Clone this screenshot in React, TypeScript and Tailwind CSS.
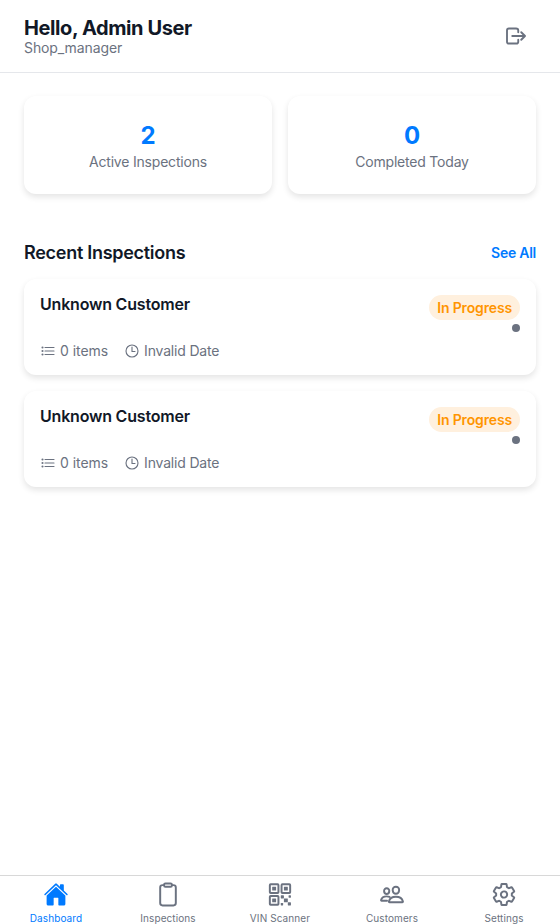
import {
  IoClipboardOutline,
  IoHome,
  IoListOutline,
  IoLogOutOutline,
  IoPeopleOutline,
  IoQrCodeOutline,
  IoSettingsOutline,
  IoTimeOutline,
} from "react-icons/io5";
import type { IconType } from "react-icons";

const shadow = "shadow-[0_3px_6px_rgba(0,0,0,0.11)]";
const boldIcon = "[&_[stroke-width]]:[stroke-width:40px]";
const smallIcon = "[&_[stroke-width]]:[stroke-width:36px]";

function StatCard({ value, label }: { value: number; label: string }) {
  return (
    <div className={`flex h-[98px] flex-1 flex-col items-center rounded-xl bg-white pt-[25px] ${shadow}`}>
      <span className="text-2xl leading-[29px] font-bold text-[#007aff]">{value}</span>
      <span className="mt-[3px] text-sm leading-[17px] tracking-[-0.2px] text-[#6b7280]">{label}</span>
    </div>
  );
}

function InspectionCard() {
  return (
    <article className={`flex h-24 justify-between rounded-xl bg-white p-4 ${shadow}`}>
      <div className="flex flex-col justify-between">
        <h3 className="text-base leading-[19px] font-semibold tracking-[-0.2px]">Unknown Customer</h3>
        <div className="flex gap-4 text-sm leading-[17px] text-[#6b7280]">
          <span className="flex items-center gap-1 tracking-[-0.05px]">
            <IoListOutline size={16} className={smallIcon} />0 items
          </span>
          <span className="flex items-center gap-1 tracking-[-0.18px]">
            <IoTimeOutline size={16} className={smallIcon} />Invalid Date
          </span>
        </div>
      </div>
      <div className="flex flex-col items-end gap-1">
        <span className="rounded-[13px] bg-[#fff0de] px-2 py-1 text-sm leading-[17px] font-semibold tracking-[-0.15px] text-[#ff9500]">
          In Progress
        </span>
        <span className="size-2 rounded-full bg-[#6b7280]" />
      </div>
    </article>
  );
}

const tabs: { label: string; icon: IconType; active?: boolean }[] = [
  { label: "Dashboard", icon: IoHome, active: true },
  { label: "Inspections", icon: IoClipboardOutline },
  { label: "VIN Scanner", icon: IoQrCodeOutline },
  { label: "Customers", icon: IoPeopleOutline },
  { label: "Settings", icon: IoSettingsOutline },
];

export default function App() {
  return (
    <div className="flex h-screen flex-col overflow-hidden bg-white font-['Inter','Liberation_Sans',sans-serif] text-[#111827]">
      <header className="flex h-[73px] shrink-0 items-center justify-between border-b border-[#e5e7eb] px-6">
        <div>
          <h1 className="text-xl leading-6 font-bold tracking-[-0.4px]">Hello, Admin User</h1>
          <p className="mb-px text-sm leading-4 tracking-[-0.1px] text-[#6b7280]">Shop_manager</p>
        </div>
        <button className="p-2 text-[#6b7280]" aria-label="Log out">
          <IoLogOutOutline size={24} className={boldIcon} />
        </button>
      </header>
      <main className="flex-1 px-6 pt-[23px]">
        <section className="flex gap-4">
          <StatCard value={2} label="Active Inspections" />
          <StatCard value={0} label="Completed Today" />
        </section>
        <section className="mt-12">
          <div className="flex items-center justify-between">
            <h2 className="text-lg leading-[22px] font-semibold tracking-[-0.28px]">Recent Inspections</h2>
            <a className="mb-px text-sm leading-4 font-semibold tracking-[-0.25px] text-[#007aff]">See All</a>
          </div>
          <div className="mt-[15px] flex flex-col gap-4">
            <InspectionCard />
            <InspectionCard />
          </div>
        </section>
      </main>
      <nav className="flex h-[49px] shrink-0 border-t border-[#d8d8d8]">
        {tabs.map(({ label, icon: Icon, active }) => (
          <div
            key={label}
            className={`flex flex-1 flex-col items-center pt-[6px] ${active ? "text-[#007aff]" : "text-[#6b7280]"}`}
          >
            <Icon className={`h-[25px] w-[26px] ${boldIcon}`} />
            <span className="mt-[5px] text-[10px] leading-3 tracking-[0.1px]">{label}</span>
          </div>
        ))}
      </nav>
    </div>
  );
}
